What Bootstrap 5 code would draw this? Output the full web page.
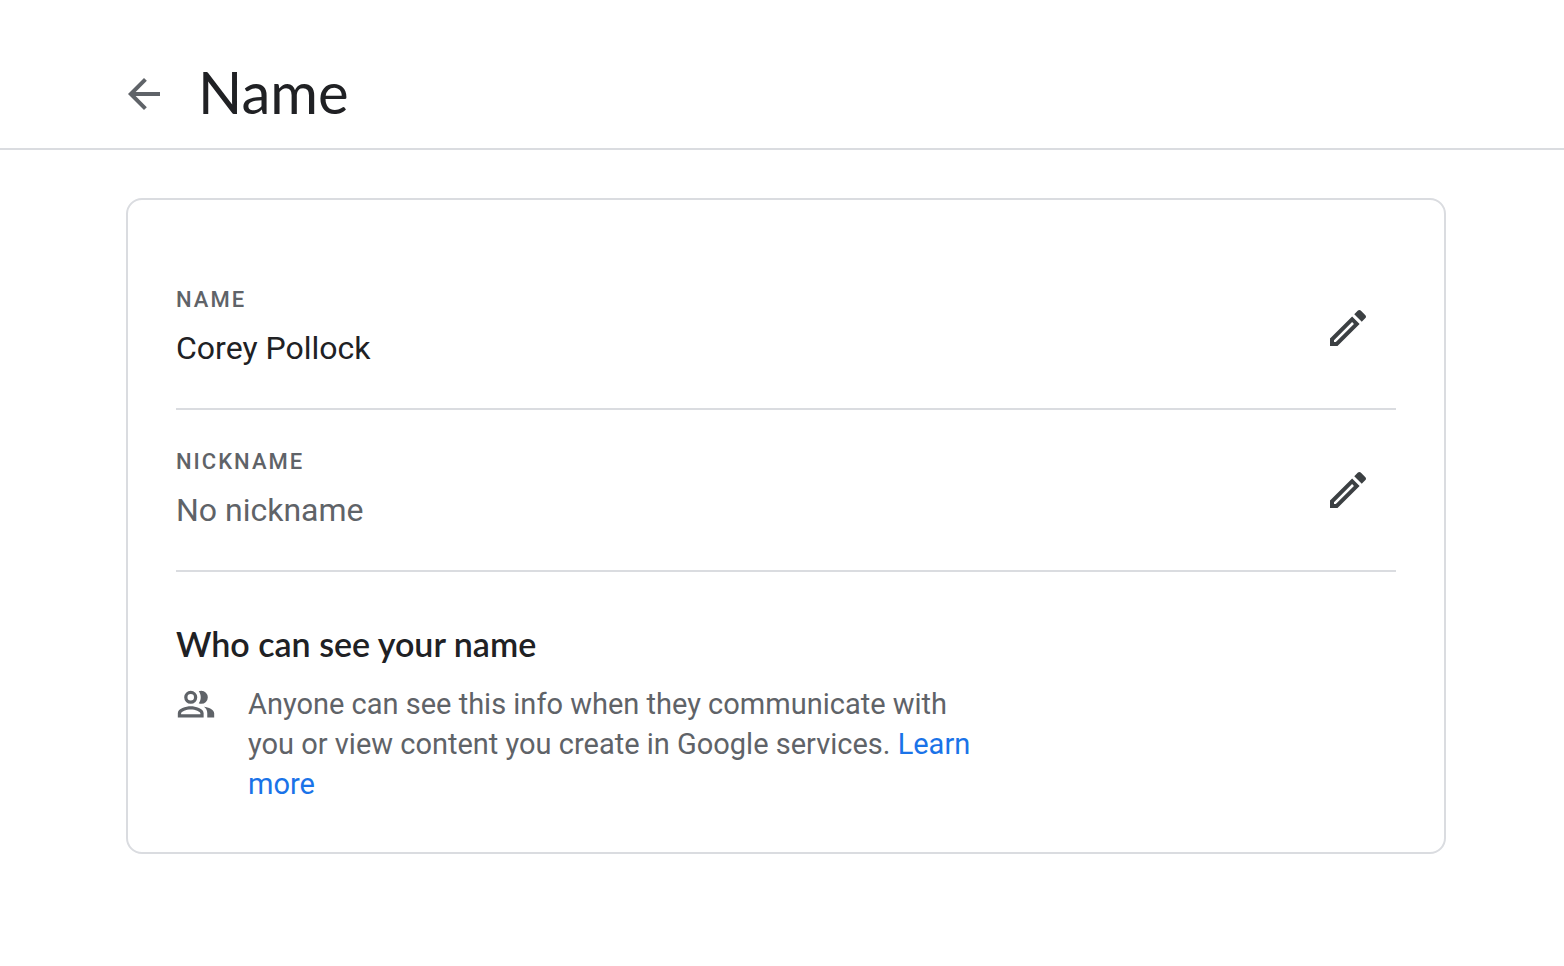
<!DOCTYPE html>
<html lang="en">
<head>
<meta charset="utf-8">
<meta name="viewport" content="width=device-width, initial-scale=1">
<title>Name</title>
<link href="https://cdn.jsdelivr.net/npm/bootstrap@5.3.0/dist/css/bootstrap.min.css" rel="stylesheet">
<style>
  :root { --line: #dadce0; --ink: #202124; --soft: #5f6368; --icon: #3c4043; --accent: #1a73e8; }
  body { font-family: Roboto, "Liberation Sans", sans-serif; color: var(--ink); background: #fff; }
  .page-shell { padding-left: 8px; }
  .page-header { border-bottom: 2px solid var(--line); padding: 54px 0 18px; }
  .header-row { gap: 38px; padding-left: 2px; }
  .page-title { font-family: Lato, "Liberation Sans", sans-serif; font-size: 58px; line-height: 76px; font-weight: 400; }
  .icon-btn { color: var(--soft); line-height: 0; }
  .icon-btn:hover { color: var(--ink); }
  .back-btn { padding: 4px 0 0; }
  .info-card { border: 2px solid var(--line); border-radius: 16px; padding: 48px; color: var(--ink); }
  .field-row { border-bottom: 2px solid var(--line); padding: 36px 24px 36px 0; }
  .field-label { font-size: 22px; line-height: 32px; font-weight: 500; letter-spacing: 2px; color: var(--soft); }
  .field-value { font-size: 32px; line-height: 48px; margin-top: 8px; }
  .text-soft { color: var(--soft); }
  .edit-btn { color: var(--icon); }
  .section-title { font-family: Lato, "Liberation Sans", sans-serif; font-size: 34px; line-height: 48px; font-weight: 600; }
  .audience { gap: 32px; max-width: 800px; font-size: 29px; line-height: 40px; color: var(--soft); }
  .audience a { color: var(--accent); }
</style>
</head>
<body>
<header class="page-header">
  <div class="page-shell">
    <div class="container p-0">
      <div class="header-row d-flex align-items-center">
        <button type="button" class="btn icon-btn back-btn border-0" aria-label="Back">
          <svg width="32" height="32" viewBox="4 4 16 16" fill="currentColor" aria-hidden="true"><path d="M20 11H7.83l5.59-5.59L12 4l-8 8 8 8 1.41-1.41L7.83 13H20v-2z"/></svg>
        </button>
        <h1 class="page-title m-0">Name</h1>
      </div>
    </div>
  </div>
</header>
<main class="page-shell py-5">
  <div class="container p-0">
    <section class="card info-card">
      <div class="field-row d-flex align-items-center justify-content-between">
        <div>
          <div class="field-label">NAME</div>
          <div class="field-value">Corey Pollock</div>
        </div>
        <button type="button" class="btn icon-btn edit-btn border-0 p-0" aria-label="Edit name">
          <svg width="48" height="48" viewBox="0 0 24 24" fill="currentColor" fill-rule="evenodd" aria-hidden="true"><path d="M3 17.25V21h3.75L17.81 9.94l-3.750-3.750L3 17.250zM5.920 19H5v-.92l9.060-9.060.92.92L5.920 19zM20.710 7.040c.390-.390.390-1.020 0-1.410l-2.340-2.340c-.390-.390-1.020-.390-1.410 0l-1.830 1.830 3.750 3.750 1.830-1.830z"/></svg>
        </button>
      </div>
      <div class="field-row d-flex align-items-center justify-content-between">
        <div>
          <div class="field-label">NICKNAME</div>
          <div class="field-value text-soft">No nickname</div>
        </div>
        <button type="button" class="btn icon-btn edit-btn border-0 p-0" aria-label="Edit nickname">
          <svg width="48" height="48" viewBox="0 0 24 24" fill="currentColor" fill-rule="evenodd" aria-hidden="true"><path d="M3 17.25V21h3.75L17.81 9.94l-3.750-3.750L3 17.250zM5.920 19H5v-.92l9.060-9.060.92.92L5.920 19zM20.710 7.040c.390-.390.390-1.020 0-1.410l-2.340-2.340c-.390-.390-1.020-.390-1.410 0l-1.830 1.830 3.750 3.750 1.830-1.830z"/></svg>
        </button>
      </div>
      <h2 class="section-title mt-5 mb-3">Who can see your name</h2>
      <div class="audience d-flex">
        <svg class="flex-shrink-0" width="40" height="40" viewBox="1 1 22 22" fill="currentColor" fill-rule="evenodd" aria-hidden="true"><path d="M2 19.400v-2.300c0-2.600 4.400-3.800 7.100-3.800s7.100 1.200 7.100 3.800v2.300H2zM3.800 17.700h10.600v-.6c0-.9-2.800-2.100-5.300-2.100s-5.300 1.200-5.300 2.100v.6zM9.100 11.900a3.600 3.600 0 1 0 0-7.200 3.600 3.600 0 0 0 0 7.200zM9.100 10.100a1.800 1.800 0 1 1 0-3.600 1.800 1.800 0 0 1 0 3.600zM16.400 13.500c1.160.84 1.800 2.060 1.800 3.600v2.300H22v-2.300c0-2.100-3.200-3.300-5.600-3.600zM14.900 11.900a3.600 3.600 0 0 0 0-7.200c-.5 0-.9.1-1.400.3.700.9 1.100 2.100 1.100 3.300s-.4 2.400-1.100 3.300c.5.2.9.3 1.400.3z"/></svg>
        <p class="m-0">Anyone can see this info when they communicate with you or view content you create in Google services. <a href="#" class="text-decoration-none">Learn more</a></p>
      </div>
    </section>
  </div>
</main>
<script src="https://cdn.jsdelivr.net/npm/bootstrap@5.3.0/dist/js/bootstrap.bundle.min.js"></script>
</body>
</html>
